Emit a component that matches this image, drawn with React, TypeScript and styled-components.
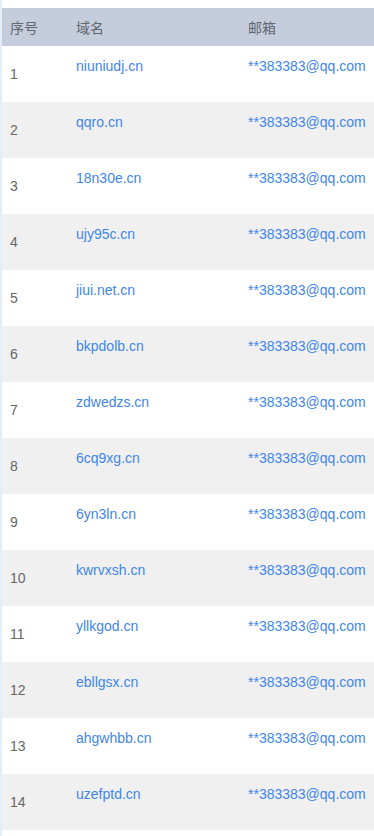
import { createGlobalStyle } from "styled-components";
import styled from "styled-components";

const GlobalStyle = createGlobalStyle`
  html, body {
    margin: 0;
    padding: 0;
    background: #fff;
  }
  body {
    font-family: "Liberation Sans", Arial, "Noto Sans CJK SC", sans-serif;
    font-size: 14px;
  }
`;

const Page = styled.div`
  border-left: 2px solid #e4eef9;
  padding-top: 8px;
  min-height: 836px;
  box-sizing: border-box;
`;

const Table = styled.div`
  display: flex;
  flex-direction: column;
`;

const HeadRow = styled.div`
  display: grid;
  grid-template-columns: 66px 172px 1fr;
  height: 38px;
  align-items: center;
  background: #c5cddd;
  color: #626770;
  padding-left: 8px;
`;

const Row = styled.div<{ $striped: boolean }>`
  display: grid;
  grid-template-columns: 66px 172px 1fr;
  height: 56px;
  padding-left: 8px;
  background: ${(p) => (p.$striped ? "#f0f0f0" : "#fff")};
  line-height: 20px;
`;

const Index = styled.span`
  align-self: center;
  color: #666;
`;

const LinkCell = styled.span`
  padding-top: 10px;
  color: #3f86ea;
  white-space: nowrap;
`;

const domains = [
  "niuniudj.cn",
  "qqro.cn",
  "18n30e.cn",
  "ujy95c.cn",
  "jiui.net.cn",
  "bkpdolb.cn",
  "zdwedzs.cn",
  "6cq9xg.cn",
  "6yn3ln.cn",
  "kwrvxsh.cn",
  "yllkgod.cn",
  "ebllgsx.cn",
  "ahgwhbb.cn",
  "uzefptd.cn",
];

export default function App() {
  return (
    <>
      <GlobalStyle />
      <Page>
        <Table>
          <HeadRow>
            <span>序号</span>
            <span>域名</span>
            <span>邮箱</span>
          </HeadRow>
          {domains.map((d, i) => (
            <Row key={d} $striped={i % 2 === 1}>
              <Index>{i + 1}</Index>
              <LinkCell>{d}</LinkCell>
              <LinkCell>**383383@qq.com</LinkCell>
            </Row>
          ))}
        </Table>
      </Page>
    </>
  );
}
